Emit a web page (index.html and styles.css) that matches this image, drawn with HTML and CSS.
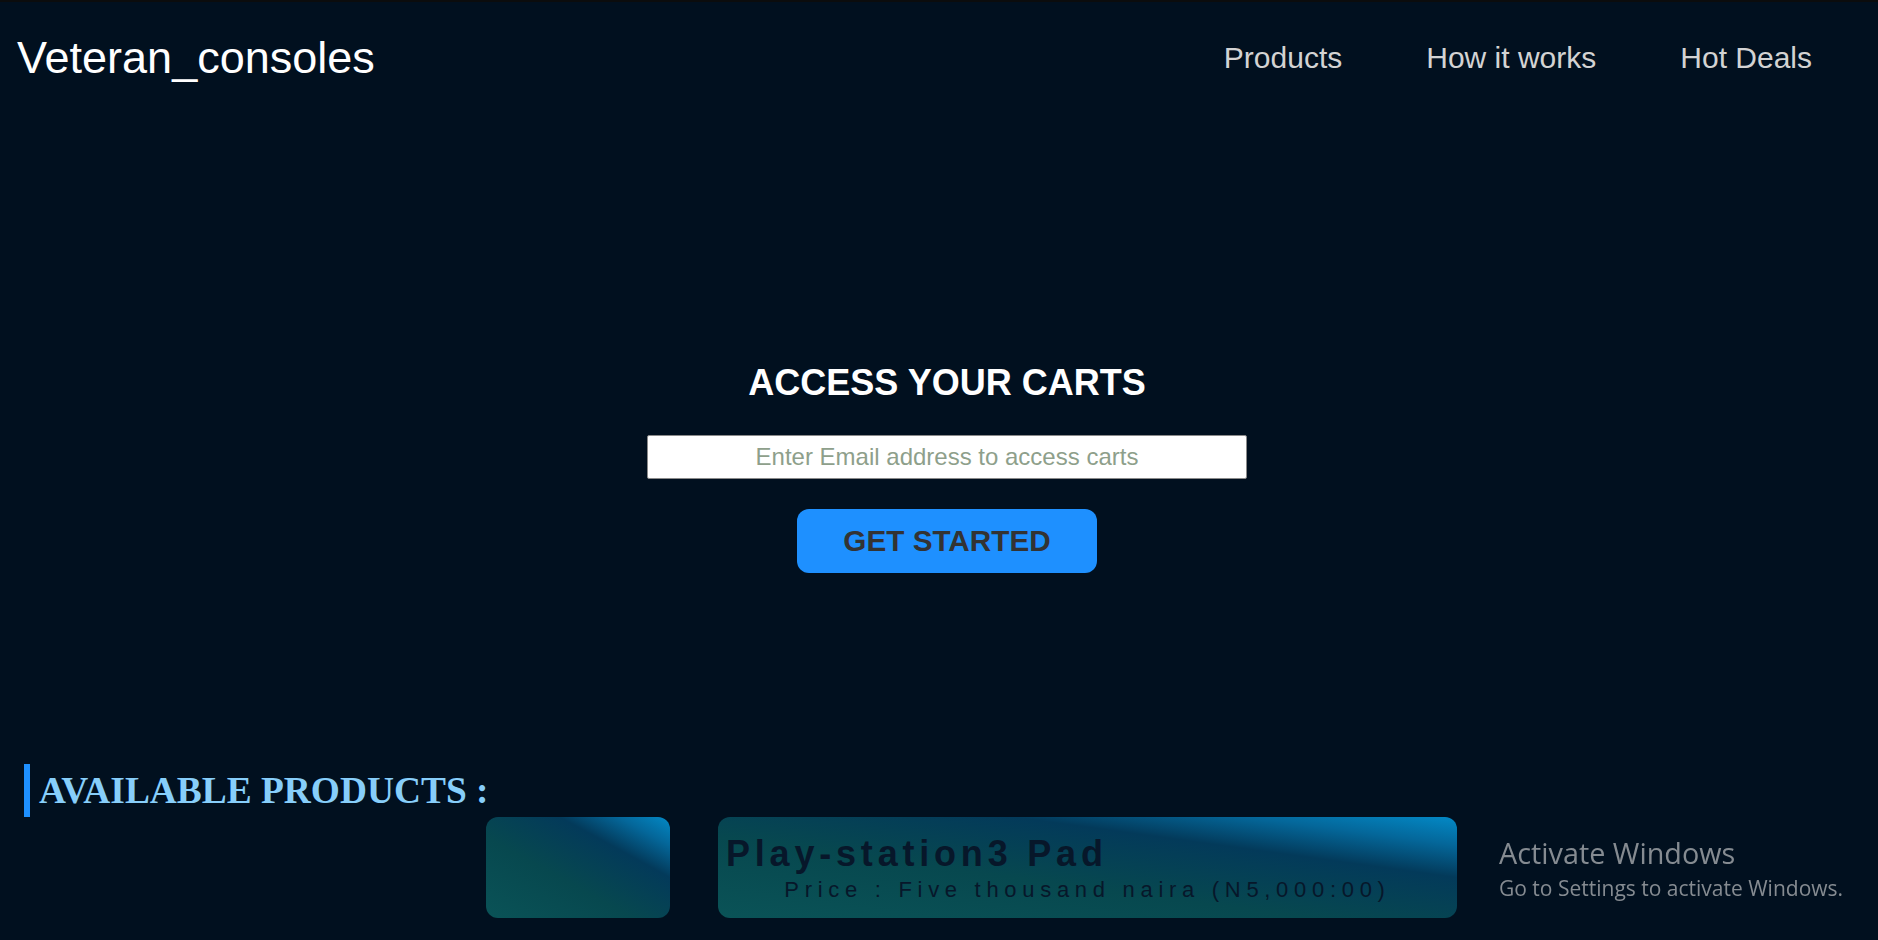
FILE: index.html
```html
<!DOCTYPE html>
<html lang="en">
<head>
<meta charset="utf-8">
<title>Veteran_consoles</title>
<link rel="stylesheet" href="styles.css">
</head>
<body>
  <div class="topline"></div>
  <header class="site-header">
    <div class="logo">Veteran_consoles</div>
    <nav>
      <ul class="nav-list">
        <li><a href="#">Products</a></li>
        <li><a href="#">How it works</a></li>
        <li><a href="#">Hot Deals</a></li>
      </ul>
    </nav>
  </header>

  <section class="hero">
    <h1 class="hero-title">ACCESS YOUR CARTS</h1>
    <input class="email-input" type="email" placeholder="Enter Email address to access carts">
    <button class="cta">GET STARTED</button>
  </section>

  <section class="products">
    <h2 class="products-title">AVAILABLE PRODUCTS :</h2>
    <div class="product-row">
      <div class="card card-small"></div>
      <div class="card card-wide">
        <h3 class="card-title">Play-station3 Pad</h3>
        <p class="card-price">Price : Five thousand naira (N5,000:00)</p>
      </div>
    </div>
  </section>

  <div class="activate">
    <div class="activate-title">Activate Windows</div>
    <div class="activate-sub">Go to Settings to activate Windows.</div>
  </div>
</body>
</html>
```

FILE: styles.css
```css
html, body {
  margin: 0;
  padding: 0;
  background: #01101f;
}

body {
  font-family: "Liberation Sans", Arial, sans-serif;
  color: #ffffff;
  min-height: 940px;
}

.topline {
  height: 2px;
  background: #0b0c0d;
}

.site-header {
  height: 112px;
  display: flex;
  align-items: center;
  justify-content: space-between;
  padding: 0 66px 0 17px;
}

.logo {
  font-size: 45px;
  color: #ffffff;
}

.nav-list {
  list-style: none;
  margin: 0;
  padding: 0;
  display: flex;
  gap: 84px;
}

.nav-list a {
  color: #d3d3d3;
  text-decoration: none;
  font-size: 30px;
}

.hero {
  padding-left: 16px;
  display: flex;
  flex-direction: column;
  align-items: center;
}

.hero-title {
  margin: 248px 0 0;
  font-size: 36px;
  font-weight: bold;
  color: #ffffff;
}

.email-input {
  margin-top: 31px;
  width: 600px;
  height: 44px;
  box-sizing: border-box;
  border: 1px solid #8a8a8a;
  border-radius: 2px;
  background: #ffffff;
  font-family: "Liberation Sans", Arial, sans-serif;
  font-size: 24px;
  text-align: center;
  color: #333;
}

.email-input::placeholder {
  color: #8e9f8b;
}

.cta {
  margin-top: 30px;
  width: 300px;
  height: 64px;
  border: none;
  border-radius: 12px;
  background: #1e90ff;
  color: #333333;
  font-family: "Liberation Sans", Arial, sans-serif;
  font-weight: bold;
  font-size: 29.7px;
}

.products {
  margin: 191px 0 0 24px;
}

.products-title {
  margin: 0;
  display: inline-block;
  border-left: 6px solid #1e90ff;
  padding: 5px 0 5px 9px;
  font-family: "Liberation Serif", "Times New Roman", serif;
  font-weight: bold;
  font-size: 37.4px;
  color: #87cefa;
}

.product-row {
  display: flex;
  gap: 48px;
  padding-left: 462px;
}

.card {
  border-radius: 12px;
  padding: 16px 8px 15px;
  background: linear-gradient(to top right, #0a5357 0%, #07484f 40%, #033a5a 70%, #04679a 86%, #0389c6 100%);
}

.card-small {
  width: 184px;
  box-sizing: border-box;
}

.card-wide {
  width: 739px;
  box-sizing: border-box;
}

.card-title {
  margin: 0 0 2px;
  font-size: 36px;
  font-weight: bold;
  letter-spacing: 4.8px;
  color: #07172a;
}

.card-price {
  margin: 0;
  font-size: 22px;
  letter-spacing: 5.7px;
  text-align: center;
  color: #07172a;
}

.activate {
  position: fixed;
  left: 1499px;
  top: 838px;
  font-family: "Open Sans", "Noto Sans", sans-serif;
  color: #858b91;
}

.activate-title {
  font-size: 28.8px;
  line-height: 29px;
}

.activate-sub {
  margin-top: 11px;
  font-size: 21px;
  line-height: 21px;
}
```
